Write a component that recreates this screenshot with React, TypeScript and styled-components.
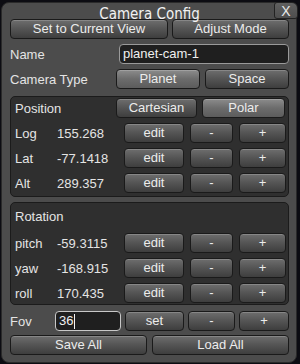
import React from "react";
import styled, { createGlobalStyle } from "styled-components";

const GlobalStyle = createGlobalStyle`
  html, body {
    margin: 0;
    padding: 0;
    background: #0c0c12;
  }
  body {
    font-family: "Liberation Sans", Arial, sans-serif;
    font-size: 13px;
    color: #e4e4e4;
  }
`;

const Window = styled.div`
  position: relative;
  box-sizing: border-box;
  margin: 2px 0 0 1px;
  width: 296px;
  height: 361px;
  background: #4c4c4c;
  border: 1px solid #2a2a2a;
  border-radius: 8px;
  padding: 0 7px 0 8px;
  display: flex;
  flex-direction: column;
`;

const TitleBar = styled.div`
  height: 16px;
  font-family: "Liberation Sans Narrow", "DejaVu Sans Condensed", sans-serif;
  font-size: 15px;
  line-height: 22px;
  text-align: center;
  color: #f2f2f2;
  overflow: visible;
  white-space: nowrap;
  position: relative;
  z-index: 1;
`;

const CloseButton = styled.div`
  position: absolute;
  top: -1px;
  right: -2px;
  width: 24px;
  height: 17px;
  box-sizing: border-box;
  background: linear-gradient(#606060, #4e4e4e);
  border: 1px solid #222;
  border-radius: 3px 6px 3px 3px;
  color: #e8e8e8;
  font-size: 14px;
  line-height: 16px;
  text-align: center;
`;

const Row = styled.div<{ cols: string; gap?: number; mt?: number }>`
  display: grid;
  grid-template-columns: ${(p) => p.cols};
  column-gap: ${(p) => p.gap ?? 5}px;
  align-items: center;
  height: 20px;
  margin-top: ${(p) => p.mt ?? 0}px;
`;

const Label = styled.span`
  white-space: nowrap;
  color: #e4e4e4;
`;

const Button = styled.div<{ active?: boolean }>`
  box-sizing: border-box;
  height: 20px;
  border: 1px solid #1a1a1a;
  border-radius: 4px;
  background: ${(p) =>
    p.active
      ? "linear-gradient(#8c8c8c, #6c6c6c 50%, #5c5c5c)"
      : "linear-gradient(#6e6e6e, #545454 50%, #3e3e3e)"};
  box-shadow: inset 0 1px 0 rgba(255, 255, 255, 0.18);
  color: #ececec;
  text-align: center;
  line-height: 18px;
  white-space: nowrap;
`;

const Field = styled.div<{ focused?: boolean }>`
  box-sizing: border-box;
  height: 20px;
  background: #1f1f1f;
  border: 1px solid ${(p) => (p.focused ? "#c8c8c8" : "#9a9a9a")};
  border-radius: 4px;
  padding-left: 3px;
  line-height: 18px;
  color: #f0f0f0;
  display: flex;
  align-items: center;
`;

const Caret = styled.span`
  display: inline-block;
  width: 1px;
  height: 15px;
  background: #f4f4f4;
  margin-left: 1px;
`;

const Panel = styled.div<{ mt: number; h: number }>`
  box-sizing: border-box;
  margin-top: ${(p) => p.mt}px;
  height: ${(p) => p.h}px;
  background: #2f2f2f;
  border: 1px solid #1b1b1b;
  border-radius: 5px;
  padding: 1px 3px 0 4px;
  display: flex;
  flex-direction: column;
  gap: 5px;
`;

const PanelHeader = styled.div<{ h: number }>`
  display: grid;
  grid-template-columns: 1fr 81px 83px;
  column-gap: 5px;
  align-items: center;
  height: ${(p) => p.h}px;
`;

const ValueRow = styled.div`
  display: grid;
  grid-template-columns: 36px 61px 60px 43px 47px;
  column-gap: 6px;
  align-items: center;
  height: 20px;
`;

type Entry = { label: string; value: string };

const position: Entry[] = [
  { label: "Log", value: "155.268" },
  { label: "Lat", value: "-77.1418" },
  { label: "Alt", value: "289.357" },
];

const rotation: Entry[] = [
  { label: "pitch", value: "-59.3115" },
  { label: "yaw", value: "-168.915" },
  { label: "roll", value: "170.435" },
];

const EntryRows: React.FC<{ items: Entry[] }> = ({ items }) => (
  <>
    {items.map((item) => (
      <ValueRow key={item.label}>
        <Label>{item.label}</Label>
        <Label>{item.value}</Label>
        <Button>edit</Button>
        <Button>-</Button>
        <Button>+</Button>
      </ValueRow>
    ))}
  </>
);

export default function App() {
  return (
    <>
      <GlobalStyle />
      <Window>
        <TitleBar>Camera Config</TitleBar>
        <CloseButton>X</CloseButton>

        <Row cols="158px 1fr" gap={4}>
          <Button>Set to Current View</Button>
          <Button>Adjust Mode</Button>
        </Row>

        <Row cols="1fr 170px" mt={5}>
          <Label>Name</Label>
          <Field>planet-cam-1</Field>
        </Row>

        <Row cols="1fr 84px 84px" mt={5}>
          <Label>Camera Type</Label>
          <Button active>Planet</Button>
          <Button>Space</Button>
        </Row>

        <Panel mt={7} h={101}>
          <PanelHeader h={20}>
            <Label>Position</Label>
            <Button>Cartesian</Button>
            <Button active>Polar</Button>
          </PanelHeader>
          <EntryRows items={position} />
        </Panel>

        <Panel mt={5} h={103}>
          <PanelHeader h={24}>
            <Label>Rotation</Label>
          </PanelHeader>
          <EntryRows items={rotation} />
        </Panel>

        <Row cols="41px 66px 59px 47px 50px" gap={4} mt={6}>
          <Label>Fov</Label>
          <Field focused>
            36
            <Caret />
          </Field>
          <Button>set</Button>
          <Button>-</Button>
          <Button>+</Button>
        </Row>

        <Row cols="1fr 1fr" mt={4}>
          <Button>Save All</Button>
          <Button>Load All</Button>
        </Row>
      </Window>
    </>
  );
}
